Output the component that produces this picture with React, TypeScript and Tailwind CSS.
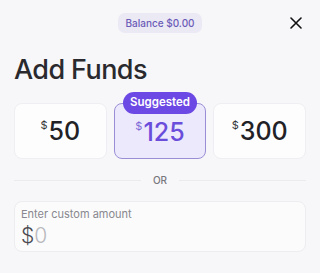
import React from "react";

const font = { fontFamily: "Inter, 'Noto Sans', sans-serif" };

function Amount({ value, selected }: { value: string; selected?: boolean }) {
  return (
    <div
      className={
        "relative flex h-[56px] flex-1 items-center justify-center rounded-[8px] border " +
        (selected
          ? "border-[#9a8fd6] bg-[#ede9fc]"
          : "border-[#efeff3] bg-[#fdfdfe]")
      }
    >
      {selected && (
        <div className="absolute left-1/2 top-[-12px] flex h-[22px] w-[74px] -translate-x-1/2 items-center justify-center rounded-full bg-[#6c48e4] text-[11.5px] font-semibold text-white">
          Suggested
        </div>
      )}
      <div className={"flex items-start " + (selected ? "mt-[2px]" : "")}>
        <span
          className={
            "mr-[1px] mt-[2px] text-[11px] leading-[12px] " +
            (selected ? "text-[#7b68d6]" : "text-[#333338]")
          }
        >
          $
        </span>
        <span
          className={
            "text-[25px] font-medium leading-[28px] " +
            (selected ? "text-[#6a4ddb]" : "text-[#222226]")
          }
        >
          {value}
        </span>
      </div>
    </div>
  );
}

export default function App() {
  return (
    <div
      style={font}
      className="h-[273px] w-[320px] overflow-hidden bg-[#f7f7f9] px-[14px]"
    >
      <div className="grid grid-cols-[1fr_auto_1fr] items-center pt-[13px]">
        <div />
        <div className="flex h-[20px] items-center rounded-[7px] bg-[#ebe9f4] px-[7px] text-[10px] font-medium text-[#6b5cb8]">
          Balance $0.00
        </div>
        <div className="flex justify-end pr-[4px]">
          <svg width="12" height="12" viewBox="0 0 12 12" fill="none">
            <path
              d="M1 1 L11 11 M11 1 L1 11"
              stroke="#111"
              strokeWidth="1.6"
              strokeLinecap="round"
            />
          </svg>
        </div>
      </div>
      <h1 className="mt-[20px] text-[27px] font-medium leading-[34px] tracking-[-0.6px] text-[#2a2a2e]">
        Add Funds
      </h1>
      <div className="mt-[16px] flex gap-[7px]">
        <Amount value="50" />
        <Amount value="125" selected />
        <Amount value="300" />
      </div>
      <div className="mt-[14px] flex h-[14px] items-center gap-[12px]">
        <div className="h-px flex-1 bg-[#ebebef]" />
        <span className="text-[10px] font-medium text-[#77777d]">OR</span>
        <div className="h-px flex-1 bg-[#ebebef]" />
      </div>
      <div className="mt-[14px] h-[51px] rounded-[8px] border border-[#ededf1] bg-[#fbfbfc] px-[6px] pt-[5px]">
        <div className="text-[11px] leading-[14px] text-[#88888e]">
          Enter custom amount
        </div>
        <div className="mt-[3px] flex text-[21px] font-light leading-[24px]">
          <span className="text-[#4a4a50]">$</span>
          <span className="text-[#b8b8bd]">0</span>
        </div>
      </div>
    </div>
  );
}
